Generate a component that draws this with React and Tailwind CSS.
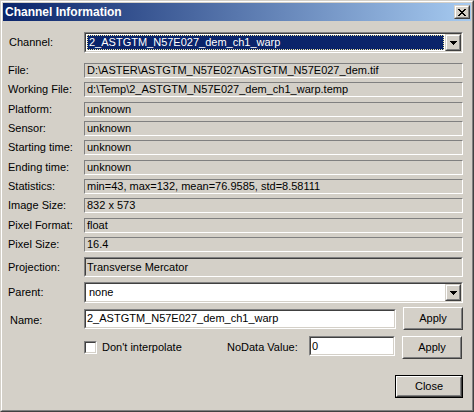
import React from 'react'

const font = "font-['Liberation_Sans',Arial,sans-serif]"

function Field({ children }) {
  return (
    <div className="flex-1 h-[15px] flex items-center pl-[2px] border border-t-[#808080] border-l-[#808080] border-r-white border-b-white whitespace-nowrap overflow-hidden">
      {children}
    </div>
  )
}

function Sunken({ className = '', children }) {
  return (
    <div className={`border border-t-[#808080] border-l-[#808080] border-r-white border-b-white ${className}`}>
      <div className="h-full w-full border border-t-[#404040] border-l-[#404040] border-r-[#d4d0c8] border-b-[#d4d0c8] flex items-stretch overflow-hidden">
        {children}
      </div>
    </div>
  )
}

function Raised({ className = '', children }) {
  return (
    <div className={`border border-t-[#d4d0c8] border-l-[#d4d0c8] border-r-[#404040] border-b-[#404040] bg-[#d4d0c8] ${className}`}>
      <div className="h-full w-full border border-t-white border-l-white border-r-[#808080] border-b-[#808080] flex items-center justify-center">
        {children}
      </div>
    </div>
  )
}

function Button({ children, isDefault }) {
  const inner = (
    <div className="h-full w-full border border-t-white border-l-white border-r-[#404040] border-b-[#404040]">
      <div className="h-full w-full border border-t-[#d4d0c8] border-l-[#d4d0c8] border-r-[#808080] border-b-[#808080] flex items-center justify-center">
        {children}
      </div>
    </div>
  )
  if (isDefault) {
    return <div className="w-[68px] h-[23px] border border-black">{inner}</div>
  }
  return <div className="w-[60px] h-[23px] ml-[7px]">{inner}</div>
}

function DownArrow() {
  return (
    <svg width="7" height="4" viewBox="0 0 7 4" shapeRendering="crispEdges">
      <path d="M0 0h7v1h-1v1h-1v1h-1v1h-1v-1h-1v-1h-1v-1h-1z" fill="#000" />
    </svg>
  )
}

function Combo({ children, selected }) {
  return (
    <Sunken className="flex-1 h-[21px] bg-white">
      <div className="flex-1 p-px bg-white flex">
        {selected ? (
          <div className="flex-1 bg-[#0a246a] text-white border border-dotted border-[#f3e9a0] flex items-center pl-[1px] whitespace-nowrap">
            {children}
          </div>
        ) : (
          <div className="flex-1 flex items-center pl-[2px] whitespace-nowrap">{children}</div>
        )}
      </div>
      <Raised className="w-[16px] h-full">
        <DownArrow />
      </Raised>
    </Sunken>
  )
}

function Row({ label, className = '', children }) {
  return (
    <div className={`flex items-center ${className}`}>
      <div className="w-[76px] shrink-0 whitespace-nowrap">{label}</div>
      {children}
    </div>
  )
}

const info = [
  ['File:', 'D:\\ASTER\\ASTGTM_N57E027\\ASTGTM_N57E027_dem.tif', 'mt-[10px]'],
  ['Working File:', 'd:\\Temp\\2_ASTGTM_N57E027_dem_ch1_warp.temp', 'mt-[4px]'],
  ['Platform:', 'unknown', 'mt-[5px]'],
  ['Sensor:', 'unknown', 'mt-[4px]'],
  ['Starting time:', 'unknown', 'mt-[4px]'],
  ['Ending time:', 'unknown', 'mt-[5px]'],
  ['Statistics:', 'min=43, max=132, mean=76.9585, std=8.58111', 'mt-[4px]'],
  ['Image Size:', '832 x 573', 'mt-[4px]'],
  ['Pixel Format:', 'float', 'mt-[5px]'],
  ['Pixel Size:', '16.4', 'mt-[4px]'],
]

export default function App() {
  return (
    <div className={`w-[474px] h-[412px] bg-[#d4d0c8] text-black text-[11px] leading-[13px] ${font} border border-t-[#d4d0c8] border-l-[#d4d0c8] border-r-[#404040] border-b-[#404040]`}>
      <div className="h-full border border-t-white border-l-white border-r-[#808080] border-b-[#808080] p-px flex flex-col">
        {/* title bar */}
        <div className="h-[18px] shrink-0 flex items-center bg-linear-to-r/srgb from-[#0a246a] to-[#a6caf0] pl-[2px]">
          <span className="text-white font-bold text-[12px]">Channel Information</span>
          <Raised className="ml-auto mr-[1px] w-[16px] h-[14px]">
            <svg width="8" height="7" viewBox="0 0 8 7" shapeRendering="crispEdges">
              <path d="M0 0h2v1h1v1h2v-1h1v-1h2v1h-1v1h-1v1h-1v1h1v1h1v1h1v1h-2v-1h-1v-1h-2v1h-1v1h-2v-1h1v-1h1v-1h1v-1h-1v-1h-1v-1h-1z" fill="#000" />
            </svg>
          </Raised>
        </div>

        <div className="flex flex-col pl-[5px] pr-[8px]">
          <Row label={<span className="pl-px">Channel:</span>} className="mt-[11px]">
            <Combo selected>2_ASTGTM_N57E027_dem_ch1_warp</Combo>
          </Row>

          {info.map(([label, value, mt]) => (
            <Row key={label} label={label} className={mt}>
              <Field>{value}</Field>
            </Row>
          ))}

          <Row label="Projection:" className="mt-[5px]">
            <Sunken className="flex-1 h-[20px]">
              <div className="flex items-center pl-[1px] whitespace-nowrap">Transverse Mercator</div>
            </Sunken>
          </Row>

          <Row label="Parent:" className="mt-[5px]">
            <Combo>none</Combo>
          </Row>

          <Row label={<span className="pl-[2px] relative top-[2px]">Name:</span>} className="mt-[4px]">
            <Sunken className="flex-1 h-[20px] bg-white">
              <div className="flex items-center pl-px whitespace-nowrap">2_ASTGTM_N57E027_dem_ch1_warp</div>
            </Sunken>
            <Button>Apply</Button>
          </Row>

          <div className="flex items-center mt-[6px]">
            <div className="w-[76px] shrink-0" />
            <div className="w-[143px] shrink-0 flex items-center">
              <Sunken className="w-[13px] h-[13px] bg-white" />
              <span className="ml-[5px]">Don't interpolate</span>
            </div>
            <div className="w-[82px] shrink-0 whitespace-nowrap">NoData Value:</div>
            <Sunken className="w-[86px] h-[20px] bg-white self-start">
              <div className="flex items-center pl-px">0</div>
            </Sunken>
            <Button>Apply</Button>
          </div>

          <div className="flex justify-end mt-[16px]">
            <Button isDefault>Close</Button>
          </div>
        </div>
      </div>
    </div>
  )
}
